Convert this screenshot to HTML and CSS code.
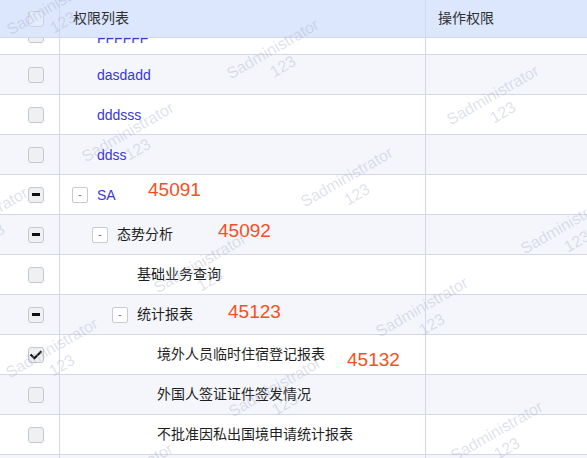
FILE: index.html
```html
<!DOCTYPE html>
<html lang="zh-CN">
<head>
<meta charset="utf-8">
<title>权限列表</title>
<link rel="stylesheet" href="styles.css">
</head>
<body>
<div class="page">
  <div class="row head">
    <div class="cell c-check"><span class="cb cb-head"></span></div>
    <div class="cell c-name head-name">权限列表</div>
    <div class="cell c-op head-op">操作权限</div>
  </div>
  <div class="body">
    <div class="body-inner">
      <div class="row">
        <div class="cell c-check"><span class="cb"></span></div>
        <div class="cell c-name lv1 first"><span class="sp"></span><span class="link">FFFFFF</span></div>
        <div class="cell c-op"></div>
      </div>
      <div class="row alt">
        <div class="cell c-check"><span class="cb"></span></div>
        <div class="cell c-name lv1"><span class="sp"></span><span class="link">dasdadd</span></div>
        <div class="cell c-op"></div>
      </div>
      <div class="row">
        <div class="cell c-check"><span class="cb"></span></div>
        <div class="cell c-name lv1"><span class="sp"></span><span class="link">dddsss</span></div>
        <div class="cell c-op"></div>
      </div>
      <div class="row alt">
        <div class="cell c-check"><span class="cb"></span></div>
        <div class="cell c-name lv1"><span class="sp"></span><span class="link">ddss</span></div>
        <div class="cell c-op"></div>
      </div>
      <div class="row">
        <div class="cell c-check"><span class="cb cb-ind"></span></div>
        <div class="cell c-name lv1"><span class="tg">-</span><span class="link">SA</span></div>
        <div class="cell c-op"></div>
      </div>
      <div class="row alt">
        <div class="cell c-check"><span class="cb cb-ind"></span></div>
        <div class="cell c-name lv2"><span class="tg">-</span><span class="txt">态势分析</span></div>
        <div class="cell c-op"></div>
      </div>
      <div class="row">
        <div class="cell c-check"><span class="cb"></span></div>
        <div class="cell c-name lv3"><span class="sp"></span><span class="txt">基础业务查询</span></div>
        <div class="cell c-op"></div>
      </div>
      <div class="row alt">
        <div class="cell c-check"><span class="cb cb-ind"></span></div>
        <div class="cell c-name lv3"><span class="tg">-</span><span class="txt">统计报表</span></div>
        <div class="cell c-op"></div>
      </div>
      <div class="row">
        <div class="cell c-check"><span class="cb cb-on"><svg viewBox="0 0 16 16" width="16" height="16"><path d="M3.3 8.2 L6.4 11.2 L12.6 5" fill="none" stroke="#111" stroke-width="2.2" stroke-linecap="square"/></svg></span></div>
        <div class="cell c-name lv4"><span class="sp"></span><span class="txt">境外人员临时住宿登记报表</span></div>
        <div class="cell c-op"></div>
      </div>
      <div class="row alt">
        <div class="cell c-check"><span class="cb"></span></div>
        <div class="cell c-name lv4"><span class="sp"></span><span class="txt">外国人签证证件签发情况</span></div>
        <div class="cell c-op"></div>
      </div>
      <div class="row">
        <div class="cell c-check"><span class="cb"></span></div>
        <div class="cell c-name lv4"><span class="sp"></span><span class="txt">不批准因私出国境申请统计报表</span></div>
        <div class="cell c-op"></div>
      </div>
      <div class="row alt">
        <div class="cell c-check"><span class="cb"></span></div>
        <div class="cell c-name lv4"><span class="sp"></span><span class="txt"></span></div>
        <div class="cell c-op"></div>
      </div>
    </div>
  </div>

  <div class="note n1">45091</div>
  <div class="note n2">45092</div>
  <div class="note n3">45123</div>
  <div class="note n4">45132</div>

  <div class="wm wm1">Sadministrator<br>123</div>
  <div class="wm wm2">Sadministrator<br>123</div>
  <div class="wm wm3">Sadministrator<br>123</div>
  <div class="wm wm4">Sadministrator<br>123</div>
  <div class="wm wm5">Sadministrator<br>123</div>
  <div class="wm wm6">Sadministrator<br>123</div>
  <div class="wm wm7">Sadministrator<br>123</div>
  <div class="wm wm8">Sadministrator<br>123</div>
  <div class="wm wm9">Sadministrator<br>123</div>
  <div class="wm wm10">Sadministrator<br>123</div>
  <div class="wm wm11">Sadministrator<br>123</div>
  <div class="wm wm12">Sadministrator<br>123</div>
  <div class="wm wm13">Sadministrator<br>123</div>
</div>
</body>
</html>
```

FILE: styles.css
```css
* { box-sizing: border-box; }

html, body {
  margin: 0;
  padding: 0;
  background: #fff;
}

body {
  font-family: "Liberation Sans", "Noto Sans CJK SC", sans-serif;
  font-size: 14px;
  color: #1f1f1f;
}

.page {
  position: relative;
  width: 587px;
  height: 458px;
  overflow: hidden;
  background: #fff;
}

.row {
  display: grid;
  grid-template-columns: 60px 366px 1fr;
  height: 40px;
  border-bottom: 1px solid #d2d8ea;
  background: #fff;
}

.row.alt { background: #f4f6fc; }

.head {
  height: 38px;
  background: #dce6fc;
  position: relative;
  z-index: 2;
}

.cell {
  display: flex;
  align-items: center;
  min-width: 0;
  white-space: nowrap;
}

.c-check {
  padding-left: 28px;
  border-right: 1px solid #d2d8ea;
}

.c-name { border-right: 1px solid #d2d8ea; }

.head-name {
  padding-left: 13px;
  padding-bottom: 3px;
  color: #303133;
}

.head-op {
  padding-left: 12px;
  padding-bottom: 3px;
  color: #303133;
}

.body {
  height: 420px;
  overflow: hidden;
}

.body-inner { margin-top: -23px; }

.lv1 { padding-left: 12px; }
.lv2 { padding-left: 32px; }
.lv3 { padding-left: 52px; }
.lv4 { padding-left: 72px; }

.first { padding-top: 7px; }

.cb {
  width: 16px;
  height: 16px;
  border: 1px solid #c4c7ce;
  border-radius: 3px;
  background: #eff0f2;
  display: flex;
  align-items: center;
  justify-content: center;
  flex: none;
}

.cb svg { display: block; margin: -1px; }

.cb-head {
  background: rgba(255, 255, 255, 0.2);
  border-color: #ccd2de;
}

.cb-ind::after {
  content: "";
  width: 8px;
  height: 3px;
  background: #111;
}

.tg {
  width: 16px;
  height: 16px;
  border: 1px solid #c8cbd2;
  border-radius: 2px;
  background: #fff;
  margin-right: 9px;
  flex: none;
  display: flex;
  align-items: center;
  justify-content: center;
  font-size: 10px;
  line-height: 1;
  color: #666;
}

.sp {
  width: 16px;
  margin-right: 9px;
  flex: none;
}

.link { color: #3838d2; }

.txt {
  color: #1f1f1f;
  padding-bottom: 4px;
}

.note {
  position: absolute;
  font-family: "Liberation Sans", sans-serif;
  font-size: 19px;
  line-height: 19px;
  color: #f5501e;
  z-index: 3;
}

.n1 { left: 148px; top: 180px; }
.n2 { left: 218px; top: 221px; }
.n3 { left: 228px; top: 302px; }
.n4 { left: 347px; top: 350px; }

.wm {
  position: absolute;
  transform: translate(-50%, -50%) rotate(-30deg);
  font-family: "Liberation Sans", sans-serif;
  font-size: 16px;
  line-height: 20px;
  text-align: center;
  white-space: nowrap;
  color: rgba(165, 172, 200, 0.36);
  pointer-events: none;
  z-index: 4;
}

.wm1 { left: 58px; top: 14px; }
.wm2 { left: 278px; top: 58px; }
.wm3 { left: 498px; top: 104px; }
.wm4 { left: 133px; top: 141px; }
.wm5 { left: 352px; top: 186px; }
.wm6 { left: -13px; top: 226px; }
.wm7 { left: 572px; top: 233px; }
.wm8 { left: 205px; top: 272px; }
.wm9 { left: 427px; top: 316px; }
.wm10 { left: 57px; top: 357px; }
.wm11 { left: 280px; top: 396px; }
.wm12 { left: 502px; top: 440px; }
.wm13 { left: 132px; top: 482px; }
```
